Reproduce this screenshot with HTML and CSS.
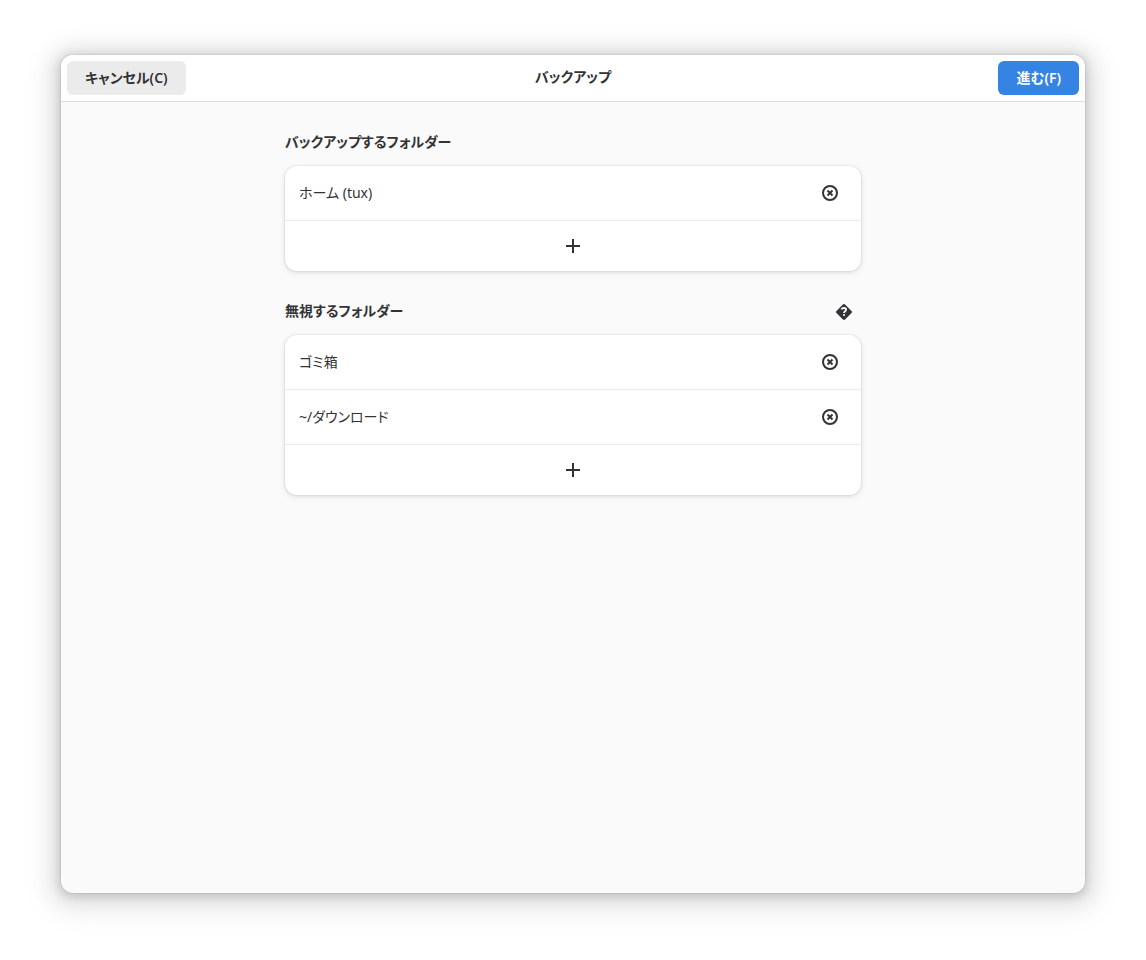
FILE: index.html
```html
<!DOCTYPE html>
<html lang="ja">
<head>
<meta charset="utf-8">
<meta name="viewport" content="width=device-width, initial-scale=1">
<title>バックアップ</title>
<link rel="stylesheet" href="styles.css">
</head>
<body>
<svg class="sprite" aria-hidden="true">
  <symbol id="remove" viewBox="0 0 16 16">
    <circle cx="8" cy="8" r="7" fill="none" stroke="currentColor" stroke-width="2"/>
    <path d="M5.500 5.500l5 5M10.500 5.500l-5 5" fill="none" stroke="currentColor" stroke-width="2"/>
  </symbol>
  <symbol id="add" viewBox="0 0 16 16">
    <path d="M7 1h2v6h6v2H9v6H7V9H1V7h6z" fill="currentColor"/>
  </symbol>
  <symbol id="help" viewBox="0 0 16 16">
    <path d="M8 0c-.4 0-.8.2-1.100.5L.5 6.900c-.6.6-.6 1.600 0 2.200l6.400 6.400c.6.6 1.600.6 2.200 0l6.400-6.400c.6-.6.6-1.600 0-2.200L9.100.5C8.800.2 8.400 0 8 0z" fill="currentColor"/>
    <path d="M5.700 5.600C5.700 4.400 6.700 4 8 4c1.300 0 2.100.6 2.100 1.700C10.100 7.200 8 7.200 8 9" fill="none" stroke="#fafafa" stroke-width="1.800"/>
    <circle cx="8" cy="11" r="1.100" fill="#fafafa"/>
  </symbol>
</svg>
<main class="window">
  <header class="headerbar">
    <div class="side"><button class="button" type="button">キャンセル(C)</button></div>
    <h1 class="title">バックアップ</h1>
    <div class="side side-end"><button class="button suggested" type="button">進む(F)</button></div>
  </header>
  <div class="content">
    <section class="group">
      <div class="group-header"><h2 class="group-title">バックアップするフォルダー</h2></div>
      <ul class="card">
        <li class="row"><span>ホーム (tux)</span><button class="icon-button" type="button" aria-label="削除"><svg class="icon"><use href="#remove"/></svg></button></li>
        <li class="add-row"><button class="add-button" type="button" aria-label="追加"><svg class="icon"><use href="#add"/></svg></button></li>
      </ul>
    </section>
    <section class="group">
      <div class="group-header"><h2 class="group-title">無視するフォルダー</h2><button class="icon-button" type="button" aria-label="ヘルプ"><svg class="icon"><use href="#help"/></svg></button></div>
      <ul class="card">
        <li class="row"><span>ゴミ箱</span><button class="icon-button" type="button" aria-label="削除"><svg class="icon"><use href="#remove"/></svg></button></li>
        <li class="row"><span>~/ダウンロード</span><button class="icon-button" type="button" aria-label="削除"><svg class="icon"><use href="#remove"/></svg></button></li>
        <li class="add-row"><button class="add-button" type="button" aria-label="追加"><svg class="icon"><use href="#add"/></svg></button></li>
      </ul>
    </section>
  </div>
</main>
</body>
</html>
```
FILE: styles.css
```css
* {
  box-sizing: border-box;
}

body {
  display: flex;
  min-height: 100vh;
  margin: 0;
  padding: 55px 61px 67px;
  background: #fff;
  color: #333336;
  font: 14px/20px "Noto Sans", "Noto Sans CJK JP", sans-serif;
  font-feature-settings: "palt", "kern";
}

button {
  border: 0;
  padding: 0;
  background: none;
  color: inherit;
  font: inherit;
  font-feature-settings: inherit;
}

.sprite {
  position: absolute;
  width: 0;
  height: 0;
}

.window {
  flex: 1;
  border-radius: 12px;
  background: #fafafa;
  box-shadow:
    0 2px 8px 2px rgba(0, 0, 0, 0.13),
    0 3px 20px 10px rgba(0, 0, 0, 0.09),
    0 6px 32px 16px rgba(0, 0, 0, 0.04),
    0 0 0 1px rgba(0, 0, 0, 0.05);
}

.headerbar {
  display: flex;
  align-items: center;
  padding: 6px;
  border-bottom: 1px solid #dedede;
  border-radius: 12px 12px 0 0;
  background: #fff;
}

.side {
  display: flex;
  flex: 1;
}

.side-end {
  justify-content: flex-end;
}

.title,
.group-title {
  margin: 0;
  padding-bottom: 2px;
  font-size: 14px;
  font-weight: 600;
}

.button {
  height: 34px;
  padding: 0 18px;
  border-radius: 6px;
  background: #ebebeb;
  font-weight: 600;
}

.suggested {
  background: #3584e4;
  color: #fff;
}

.content {
  display: flex;
  flex-direction: column;
  gap: 24px;
  max-width: 576px;
  margin: 0 auto;
  padding: 24px 0;
}

.group {
  display: flex;
  flex-direction: column;
  gap: 6px;
}

.group-header {
  display: flex;
  align-items: center;
  justify-content: space-between;
  height: 34px;
}

.card {
  margin: 0;
  padding: 0;
  border-radius: 12px;
  background: #fff;
  box-shadow:
    0 0 0 1px rgba(0, 0, 0, 0.03),
    0 1px 3px 1px rgba(0, 0, 0, 0.07),
    0 2px 6px 2px rgba(0, 0, 0, 0.03);
  list-style: none;
}

.row {
  display: flex;
  align-items: center;
  justify-content: space-between;
  height: 55px;
  padding: 0 14px;
  border-bottom: 1px solid #ebebeb;
}

.icon-button {
  display: flex;
  align-items: center;
  justify-content: center;
  width: 34px;
  height: 34px;
}

.add-button {
  display: flex;
  align-items: center;
  justify-content: center;
  width: 100%;
  height: 50px;
}

.icon {
  width: 16px;
  height: 16px;
}
```
